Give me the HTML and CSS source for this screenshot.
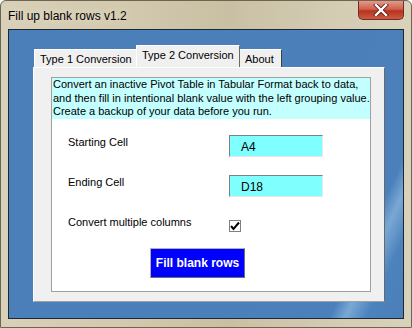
FILE: index.html
```html
<!DOCTYPE html>
<html lang="en">
<head>
    <meta charset="UTF-8">
    <title>Fill up blank rows v1.2</title>
    <link rel="stylesheet" href="styles.css">
</head>
<body>

<div class="window">
    <div class="titlebar">
        <span class="caption">Fill up blank rows v1.2</span>
        <div class="close">
            <svg width="16" height="12" viewBox="0 0 16 12">
                <path d="M3 1 L13 11 M13 1 L3 11" stroke="#5a1a12" stroke-width="4" stroke-linecap="square"/>
                <path d="M3 1 L13 11 M13 1 L3 11" stroke="#ffffff" stroke-width="2.4" stroke-linecap="square"/>
            </svg>
        </div>
    </div>

    <div class="client">
        <div class="tabs">
            <div class="tab">Type 1 Conversion</div>
            <div class="tab active">Type 2 Conversion</div>
            <div class="tab about">About</div>
        </div>
        <div class="panel">
            <div class="frame">
                <div class="desc">
                    <div>Convert an inactive Pivot Table in Tabular Format back to data,</div>
                    <div>and then fill in intentional blank value with the left grouping value.</div>
                    <div>Create a backup of your data before you run.</div>
                </div>
                <div class="row first">
                    <span class="lbl">Starting Cell</span>
                    <div class="box">A4</div>
                </div>
                <div class="row">
                    <span class="lbl">Ending Cell</span>
                    <div class="box">D18</div>
                </div>
                <div class="row check-row">
                    <span class="lbl">Convert multiple columns</span>
                    <div class="check">
                        <svg width="10" height="10" viewBox="0 0 10 10">
                            <path d="M1 5 L3.5 8 L9 1.5" stroke="#000" stroke-width="2" fill="none"/>
                        </svg>
                    </div>
                </div>
                <button class="fill" type="button">Fill blank rows</button>
            </div>
        </div>
    </div>
</div>

</body>
</html>
```

FILE: styles.css
```css
*{
    padding: 0;
    margin: 0;
    box-sizing: border-box;
}
body{
    width: 412px;
    height: 328px;
    overflow: hidden;
    font-family: "Liberation Sans", Arial, sans-serif;
}

.window{
    width: 412px;
    height: 328px;
    background: linear-gradient(90deg, #d8d0b8 0%, #d2c9ae 30%, #c9c0a4 55%, #d3cbb2 80%, #d9d2bb 100%);
    border: 1px solid #6b6552;
    border-radius: 6px 6px 0 0;
}

.titlebar{
    height: 28px;
    display: flex;
    justify-content: space-between;
    align-items: flex-start;
}

.caption{
    font-size: 12px;
    color: #000;
    margin-left: 7px;
    margin-top: 8px;
    text-shadow: 0 0 6px #efe9d8;
}

.close{
    width: 46px;
    height: 19px;
    margin-right: 7px;
    border: 1px solid #6a3028;
    border-top: 0;
    border-radius: 0 0 5px 5px;
    background: linear-gradient(#e59a8a 0%, #d0604c 45%, #b8321f 55%, #cf5a40 100%);
    display: flex;
    justify-content: center;
    align-items: center;
}

.client{
    margin: 0 7px;
    height: 290px;
    border: 1px solid #1d2633;
    background: linear-gradient(115deg, #4a7fba 0%, #4b80bb 86%, #7aa8d4 89%, #4d83bd 93%, #4a7fba 100%);
    padding: 15px 0 0 24px;
}

.tabs{
    display: flex;
    align-items: flex-end;
    height: 22px;
    font-size: 11px;
    padding-left: 1px;
}

.tab{
    height: 18px;
    width: 103px;
    background: #f0f0f0;
    border-top: 1px solid #ffffff;
    border-left: 1px solid #ffffff;
    border-right: 1px solid #a0a0a0;
    padding: 3px 0 0 5px;
    color: #000;
}

.tab.active{
    height: 22px;
    width: 104px;
    padding-top: 3px;
    margin-left: -1px;
    border-right: 1px solid #696969;
}

.tab.about{
    width: 42px;
    border-left: 0;
    border-right: 1px solid #404040;
}

.panel{
    width: 352px;
    height: 235px;
    background: #f0f0f0;
    border-top: 1px solid #ffffff;
    border-left: 1px solid #ffffff;
    border-right: 1px solid #696969;
    border-bottom: 1px solid #a0a0a0;
    padding: 9px 0 0 17px;
}

.frame{
    width: 320px;
    height: 215px;
    background: #ffffff;
    border: 1px solid #a0a0a0;
}

.desc{
    height: 41px;
    background: #c4ffff;
    font-size: 11px;
    line-height: 13.5px;
    color: #000;
    padding-left: 1px;
    white-space: nowrap;
    overflow: hidden;
}

.row{
    display: flex;
    align-items: flex-start;
    padding-left: 16px;
    margin-top: 18px;
}

.row.first{
    margin-top: 16px;
}

.lbl{
    width: 161px;
    font-size: 11px;
    line-height: 14px;
    color: #000;
}

.box{
    width: 94px;
    height: 22px;
    background: #80ffff;
    border-top: 1px solid #808080;
    border-left: 1px solid #808080;
    border-bottom: 1px solid #e8e8e8;
    border-right: 1px solid #e8e8e8;
    font-size: 12px;
    padding: 4px 0 0 11px;
    color: #000;
}

.check-row{
    margin-top: 18px;
}

.check{
    width: 12px;
    height: 12px;
    margin-top: 5px;
    border: 1px solid #808080;
    background: #ffffff;
    display: flex;
    justify-content: center;
    align-items: center;
}

.fill{
    display: block;
    width: 95px;
    height: 30px;
    margin: 16px 0 0 98px;
    background: #0000ff;
    color: #ffffff;
    font-family: "Liberation Sans", Arial, sans-serif;
    font-weight: bold;
    font-size: 12px;
    border: 1px solid #b0b0b0;
    border-bottom-color: #707070;
    border-right-color: #707070;
}
```
